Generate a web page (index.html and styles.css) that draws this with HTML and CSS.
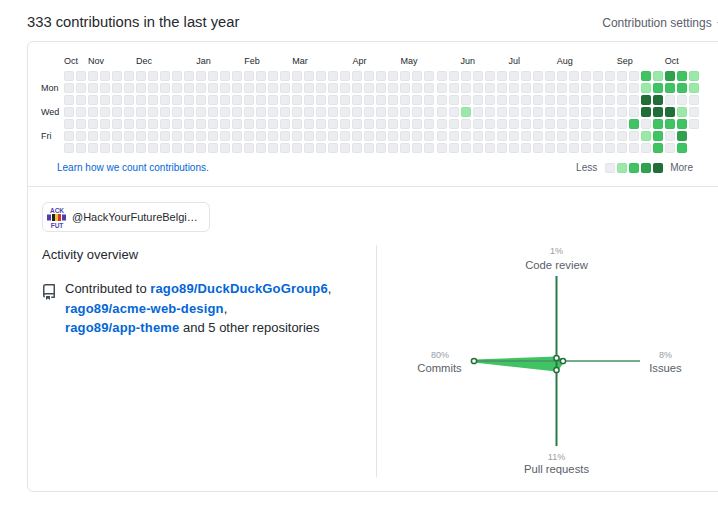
FILE: index.html
```html
<!DOCTYPE html>
<html>
<head>
<meta charset="utf-8">
<title>Contributions</title>
<link rel="stylesheet" href="styles.css">
</head>
<body>
<div class="wrap">
  <div class="title-row">
    <h2 class="title">333 contributions in the last year</h2>
    <span class="settings">Contribution settings <span class="caret"></span></span>
  </div>
  <div class="card">
    <div class="graph">
      <div class="calendar" id="calendar">
        <span class="month" style="grid-column: 2">Oct</span>
        <span class="month" style="grid-column: 4">Nov</span>
        <span class="month" style="grid-column: 8">Dec</span>
        <span class="month" style="grid-column: 13">Jan</span>
        <span class="month" style="grid-column: 17">Feb</span>
        <span class="month" style="grid-column: 21">Mar</span>
        <span class="month" style="grid-column: 26">Apr</span>
        <span class="month" style="grid-column: 30">May</span>
        <span class="month" style="grid-column: 35">Jun</span>
        <span class="month" style="grid-column: 39">Jul</span>
        <span class="month" style="grid-column: 43">Aug</span>
        <span class="month" style="grid-column: 48">Sep</span>
        <span class="month" style="grid-column: 52">Oct</span>
        <span class="day" style="grid-row: 3">Mon</span>
        <span class="day" style="grid-row: 5">Wed</span>
        <span class="day" style="grid-row: 7">Fri</span>
      </div>
      <div class="graph-foot">
        <a class="learn" href="#">Learn how we count contributions.</a>
        <div class="legend">
          <span class="legend-word">Less</span>
          <span class="cell"></span>
          <span class="cell l1"></span>
          <span class="cell l2"></span>
          <span class="cell l3"></span>
          <span class="cell l4"></span>
          <span class="legend-word more">More</span>
        </div>
      </div>
    </div>
    <div class="activity">
      <div class="org-pill">
        <svg class="org-logo" width="20" height="21" viewBox="0 0 20 21">
          <text x="10" y="5.5" class="logo-text">ACK</text>
          <rect x="0" y="7.5" width="4" height="6" fill="#4a3fb0"/>
          <rect x="5" y="7" width="3" height="7" fill="#222"/>
          <rect x="8" y="7" width="3" height="7" fill="#f2c230"/>
          <rect x="11" y="7" width="3" height="7" fill="#d9342b"/>
          <rect x="15" y="7.5" width="4" height="6" fill="#4a3fb0"/>
          <text x="10" y="20.5" class="logo-text">FUT</text>
        </svg>
        <span class="org-name">@HackYourFutureBelgium</span>
      </div>
      <div class="overview">
        <div class="overview-left">
          <h3 class="overview-title">Activity overview</h3>
          <div class="contributed">
            <svg class="repo-icon" width="16" height="16" viewBox="0 0 16 16"><path fill-rule="evenodd" d="M2 2.5A2.5 2.5 0 014.5 0h8.75a.75.75 0 01.75.75v12.5a.75.75 0 01-.75.75h-2.5a.75.75 0 110-1.5h1.75v-2h-8a1 1 0 00-.714 1.7.75.75 0 01-1.072 1.05A2.495 2.495 0 012 11.5v-9zm10.5-1V9h-8c-.356 0-.694.074-1 .208V2.5a1 1 0 011-1h8zM5 12.25v3.25a.25.25 0 00.4.2l1.45-1.087a.25.25 0 01.3 0L8.6 15.7a.25.25 0 00.4-.2v-3.25a.25.25 0 00-.25-.25h-3.5a.25.25 0 00-.25.25z"></path></svg>
            <p class="contributed-text">Contributed to <a href="#">rago89/DuckDuckGoGroup6</a>, <a href="#">rago89/acme-web-design</a>, <a href="#">rago89/app-theme</a> and 5 other repositories</p>
          </div>
        </div>
        <div class="overview-right">
          <svg class="radar" width="340" height="232" viewBox="0 0 340 232">
            <polygon class="area" points="97,116 179.5,113 186,116 179.5,125"/>
            <line class="axis" x1="179.5" y1="31" x2="179.5" y2="201"/>
            <line class="axis axis-x" x1="97" y1="116" x2="263" y2="116"/>
            <circle class="point" cx="97" cy="116" r="2.6"/>
            <circle class="point" cx="179.5" cy="113" r="2.6"/>
            <circle class="point" cx="186" cy="116" r="2.6"/>
            <circle class="point" cx="179.5" cy="125" r="2.6"/>
            <text class="pct" x="179.5" y="9">1%</text>
            <text class="axis-name" x="179.5" y="24">Code review</text>
            <text class="pct" x="63" y="113">80%</text>
            <text class="axis-name" x="62.5" y="127">Commits</text>
            <text class="pct" x="288.5" y="113">8%</text>
            <text class="axis-name" x="288.5" y="127">Issues</text>
            <text class="pct" x="179.5" y="215">11%</text>
            <text class="axis-name" x="179.5" y="228">Pull requests</text>
          </svg>
        </div>
      </div>
    </div>
  </div>
</div>
<script src="calendar.js"></script>
</body>
</html>
```

FILE: styles.css
```css
html, body
{
  margin: 0;
  height: 100%;
  overflow: hidden;
  background: #fff;
}
body
{
  font-family: "Liberation Sans", Arial, sans-serif;
  color: #24292e;
}
.wrap
{
  width: 700px;
  margin-left: 27px;
  padding-top: 13px;
}
.title-row
{
  display: flex;
  justify-content: space-between;
  align-items: center;
  height: 20px;
  margin-bottom: 8px;
}
.title
{
  margin: 0;
  padding-bottom: 2px;
  font-size: 14.75px;
  font-weight: 400;
  line-height: 18px;
}
.settings
{
  margin-right: 2px;
  font-size: 12px;
  color: #586069;
  white-space: nowrap;
}
.caret
{
  display: inline-block;
  margin-left: 2px;
  vertical-align: middle;
  border: 4px solid transparent;
  border-top-color: #586069;
  border-bottom: 0;
}
.card
{
  height: 451px;
  box-sizing: border-box;
  border: 1px solid #e1e4e8;
  border-radius: 6px;
}
.graph
{
  height: 145px;
  box-sizing: border-box;
  padding: 14px 0 0 13px;
  border-bottom: 1px solid #e1e4e8;
}
.calendar
{
  display: grid;
  grid-template-columns: 21px repeat(53, 10px);
  grid-template-rows: 13px repeat(7, 10px);
  column-gap: 2.02px;
  row-gap: 2px;
}
.month
{
  grid-row: 1;
  font-size: 9px;
  line-height: 10px;
  color: #24292e;
  white-space: nowrap;
}
.day
{
  grid-column: 1;
  font-size: 9px;
  line-height: 10px;
  color: #24292e;
}
.cell
{
  display: block;
  width: 10px;
  height: 10px;
  box-sizing: border-box;
  border-radius: 2px;
  background: #ebedf0;
  border: 1px solid rgba(27, 31, 35, 0.04);
}
.l1 { background: #9be9a8; }
.l2 { background: #40c463; }
.l3 { background: #30a14e; }
.l4 { background: #216e39; }
.graph-foot
{
  display: flex;
  justify-content: space-between;
  align-items: center;
  width: 636px;
  margin: 8px 0 0 16px;
  font-size: 10px;
  line-height: 14px;
}
.learn
{
  color: #0366d6;
  text-decoration: none;
}
.legend
{
  display: flex;
  align-items: center;
  gap: 2px;
  color: #586069;
}
.legend-word { margin-right: 6px; }
.legend-word.more { margin: 0 0 0 5px; }
.activity
{
  padding: 15px 0 0 14px;
}
.org-pill
{
  display: flex;
  align-items: center;
  box-sizing: border-box;
  width: 168px;
  height: 30px;
  padding: 0 8px 0 4px;
  border: 1px solid #e1e4e8;
  border-radius: 6px;
}
.org-logo
{
  flex: none;
  margin-right: 5px;
}
.logo-text
{
  font-size: 6.5px;
  font-weight: 700;
  text-anchor: middle;
  fill: #4a3fb0;
}
.org-name
{
  overflow: hidden;
  font-size: 11px;
  white-space: nowrap;
  text-overflow: ellipsis;
}
.overview
{
  display: flex;
  margin-top: 13px;
}
.overview-left
{
  width: 334px;
  flex: none;
}
.overview-title
{
  margin: 0;
  font-size: 13px;
  font-weight: 400;
  line-height: 20px;
}
.contributed
{
  display: flex;
  margin-top: 14px;
}
.repo-icon
{
  flex: none;
  margin: 5px 8px 0 -1px;
  fill: #444d56;
}
.contributed-text
{
  width: 272px;
  margin: 0;
  font-size: 13px;
  line-height: 19.5px;
}
.contributed-text a
{
  font-weight: 700;
  letter-spacing: 0.15px;
  color: #0366d6;
  text-decoration: none;
  white-space: nowrap;
}
.overview-right
{
  border-left: 1px solid #e1e4e8;
}
.radar
{
  display: block;
}
.axis
{
  stroke: #2a7a45;
  stroke-width: 2;
}
.axis-x
{
  stroke: #4a9164;
  stroke-width: 1.5;
}
.area
{
  fill: #40c463;
  stroke: #40c463;
  stroke-width: 3;
  stroke-linejoin: round;
}
.point
{
  fill: #fff;
  stroke: #216e39;
  stroke-width: 1.5;
}
.pct
{
  font-size: 9px;
  fill: #959da5;
  text-anchor: middle;
}
.axis-name
{
  font-size: 11.25px;
  fill: #586069;
  text-anchor: middle;
}
```

FILE: calendar.js
```js
// coloured days as "column,row,level", everything else is an empty cell
var active = [
  "33,3,1", "47,4,2",
  "48,0,2", "49,0,1", "50,0,3", "51,0,2", "52,0,1",
  "48,1,1", "49,1,2", "50,1,2", "51,1,2", "52,1,1",
  "48,2,4", "49,2,4",
  "48,3,4", "49,3,4", "50,3,4", "51,3,1",
  "49,4,2", "50,4,2", "51,4,2",
  "48,5,1", "49,5,2", "51,5,3",
  "49,6,2", "51,6,2"
];
var levels = {};
active.forEach(function (item) {
  var p = item.split(",");
  levels[p[0] + "," + p[1]] = p[2];
});

var calendar = document.getElementById("calendar");
for (var col = 0; col < 53; col++) {
  // the current week stops at Thursday
  var days = col === 52 ? 5 : 7;
  for (var row = 0; row < days; row++) {
    var cell = document.createElement("span");
    var level = levels[col + "," + row];
    cell.className = level ? "cell l" + level : "cell";
    cell.style.gridColumn = col + 2;
    cell.style.gridRow = row + 2;
    calendar.appendChild(cell);
  }
}
```
